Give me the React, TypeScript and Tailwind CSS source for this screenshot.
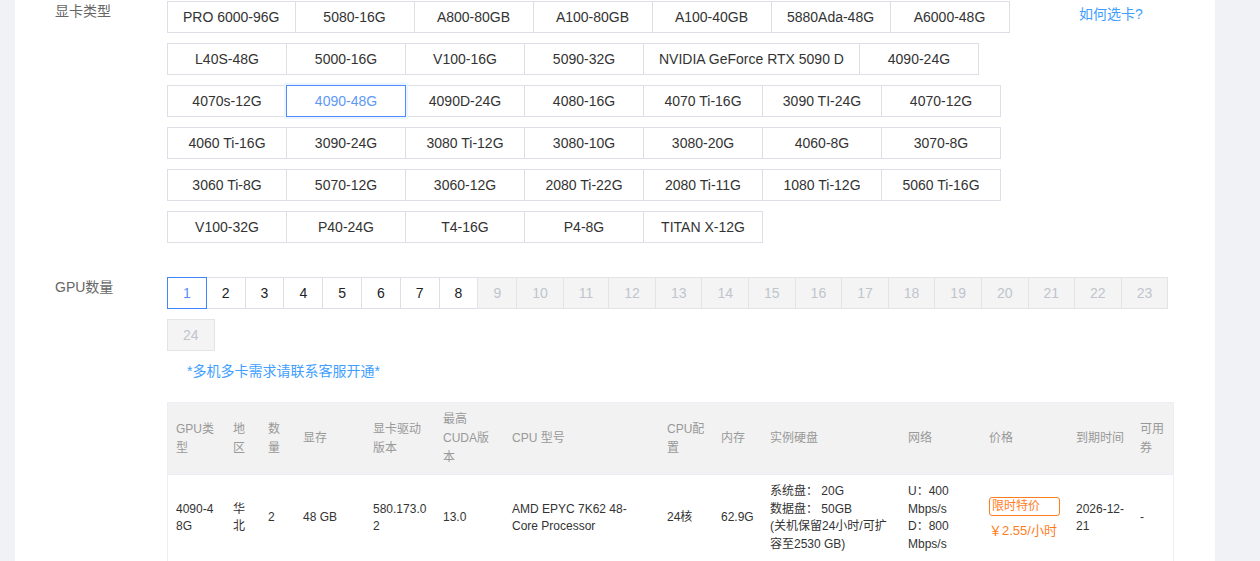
import React from "react";

const gpuTypes = [
  "PRO 6000-96G", "5080-16G", "A800-80GB", "A100-80GB", "A100-40GB", "5880Ada-48G", "A6000-48G",
  "L40S-48G", "5000-16G", "V100-16G", "5090-32G", "NVIDIA GeForce RTX 5090 D", "4090-24G",
  "4070s-12G", "4090-48G", "4090D-24G", "4080-16G", "4070 Ti-16G", "3090 TI-24G", "4070-12G",
  "4060 Ti-16G", "3090-24G", "3080 Ti-12G", "3080-10G", "3080-20G", "4060-8G", "3070-8G",
  "3060 Ti-8G", "5070-12G", "3060-12G", "2080 Ti-22G", "2080 Ti-11G", "1080 Ti-12G", "5060 Ti-16G",
  "V100-32G", "P40-24G", "T4-16G", "P4-8G", "TITAN X-12G",
];

const counts = Array.from({ length: 24 }, (_, i) => i + 1);

const font = "font-['Liberation_Sans','Noto_Sans_CJK_SC',sans-serif]";

function GpuButton({ label, active }: { label: string; active?: boolean }) {
  if (active) {
    return (
      <div className="relative z-10 -ml-px h-[32px] min-w-[120px] px-[15px] flex items-center justify-center border border-[#4d8dff] bg-white text-[14px] text-[#5e98f7] shadow-[0_0_0_2px_#eef4ff] whitespace-nowrap">
        {label}
      </div>
    );
  }
  return (
    <div className="-ml-px h-[32px] min-w-[120px] px-[15px] flex items-center justify-center border border-[#dcdfe6] bg-white text-[14px] text-[#333] whitespace-nowrap">
      {label}
    </div>
  );
}

function CountButton({ n }: { n: number }) {
  if (n === 1) {
    return (
      <div className="relative z-10 -ml-px h-[32px] px-[15px] flex items-center justify-center border border-[#4085ff] bg-white text-[14px] text-[#5b8cff]">
        {n}
      </div>
    );
  }
  if (n <= 8) {
    return (
      <div className="-ml-px h-[32px] px-[15px] flex items-center justify-center border border-[#dcdfe6] bg-white text-[14px] text-[#222]">
        {n}
      </div>
    );
  }
  return (
    <div className="-ml-px h-[32px] px-[15px] flex items-center justify-center border border-[#e2e4e8] bg-[#f4f4f5] text-[14px] text-[#c0c4cc]">
      {n}
    </div>
  );
}

const th = "bg-[#f2f2f2] text-[#999] font-normal text-left text-[12px] leading-[19px] py-[7px] pl-[8px] align-middle border-b border-[#ebeef5] [overflow-wrap:anywhere]";
const td = "text-[12px] leading-[17.5px] text-[#333] py-[8px] pl-[8px] align-middle [overflow-wrap:anywhere]";

export default function App() {
  return (
    <div className={`w-full h-[561px] bg-[#f0f2f5] overflow-hidden ${font}`}>
      <div className="ml-[15px] w-[1200px] h-full bg-white pt-px pl-[40px]">
        {/* GPU type */}
        <div className="flex">
          <div className="w-[112px] shrink-0 text-[14px] leading-[20px] text-[#666]">显卡类型</div>
          <div className="w-[880px] shrink-0 flex flex-wrap gap-y-[10px] pl-px">
            {gpuTypes.map((t) => (
              <GpuButton key={t} label={t} active={t === "4090-48G"} />
            ))}
          </div>
          <div className="ml-[32px] pt-[3px] text-[14px] leading-[20px] text-[#409eff]">如何选卡?</div>
        </div>

        {/* GPU count */}
        <div className="flex mt-[34px]">
          <div className="w-[112px] shrink-0 text-[14px] leading-[20px] text-[#666]">GPU数量</div>
          <div className="flex flex-col">
            <div className="w-[1020px] flex flex-wrap gap-y-[10px] pl-px">
              {counts.map((n) => (
                <CountButton key={n} n={n} />
              ))}
            </div>
            <div className="mt-[10px] pl-[20px] text-[14px] leading-[20px] text-[#409eff]">*多机多卡需求请联系客服开通*</div>
          </div>
        </div>

        {/* Table */}
        <div className="mt-[21px] ml-[112px] w-[1007px] border border-[#ebeef5]">
          <table className="w-[1005px] table-fixed border-collapse">
            <colgroup>
              <col className="w-[57px]" />
              <col className="w-[35px]" />
              <col className="w-[35px]" />
              <col className="w-[70px]" />
              <col className="w-[70px]" />
              <col className="w-[69px]" />
              <col className="w-[155px]" />
              <col className="w-[54px]" />
              <col className="w-[49px]" />
              <col className="w-[138px]" />
              <col className="w-[81px]" />
              <col className="w-[87px]" />
              <col className="w-[64px]" />
              <col className="w-[41px]" />
            </colgroup>
            <thead>
              <tr>
                <th className={`${th} pr-[8px]`}>GPU类型</th>
                <th className={`${th} pr-[8px]`}>地区</th>
                <th className={`${th} pr-[8px]`}>数量</th>
                <th className={`${th} pr-[8px]`}>显存</th>
                <th className={`${th} pr-[8px]`}>显卡驱动版本</th>
                <th className={`${th} pr-[8px]`}>最高CUDA版本</th>
                <th className={`${th} pr-[12px]`}>CPU 型号</th>
                <th className={`${th} pr-[7px]`}>CPU配置</th>
                <th className={`${th} pr-[8px]`}>内存</th>
                <th className={`${th} pr-[8px]`}>实例硬盘</th>
                <th className={`${th} pr-[8px]`}>网络</th>
                <th className={`${th} pr-[8px]`}>价格</th>
                <th className={`${th} pr-[6px]`}>到期时间</th>
                <th className={`${th} pr-[8px]`}>可用券</th>
              </tr>
            </thead>
            <tbody>
              <tr>
                <td className={`${td} pr-[8px] break-all`}>4090-48G</td>
                <td className={`${td} pr-[8px]`}>华北</td>
                <td className={`${td} pr-[8px]`}>2</td>
                <td className={`${td} pr-[8px]`}>48 GB</td>
                <td className={`${td} pr-[8px]`}>580.173.02</td>
                <td className={`${td} pr-[8px]`}>13.0</td>
                <td className={`${td} pr-[12px]`}>AMD EPYC 7K62 48-Core Processor</td>
                <td className={`${td} pr-[7px]`}>24核</td>
                <td className={`${td} pr-[8px]`}>62.9G</td>
                <td className={`${td} pr-[8px]`}>
                  <div>系统盘： 20G</div>
                  <div>数据盘： 50GB</div>
                  <div>(关机保留24小时/可扩容至2530 GB)</div>
                </td>
                <td className={`${td} pr-[8px]`}>
                  <div>U：400 Mbps/s</div>
                  <div>D：800 Mbps/s</div>
                </td>
                <td className={`${td} pr-[8px]`}>
                  <div className="border border-[#ff7d1e] rounded-[3px] text-[#ff7d1e] text-[12px] leading-[17px] pl-[2px]">限时特价</div>
                  <div className="mt-[6px] text-[13px] leading-[18px] text-[#ff7d1e] whitespace-nowrap">￥2.55/小时</div>
                </td>
                <td className={`${td} pr-[6px]`}>2026-12-21</td>
                <td className={`${td} pr-[8px]`}>-</td>
              </tr>
            </tbody>
          </table>
        </div>
      </div>
    </div>
  );
}
